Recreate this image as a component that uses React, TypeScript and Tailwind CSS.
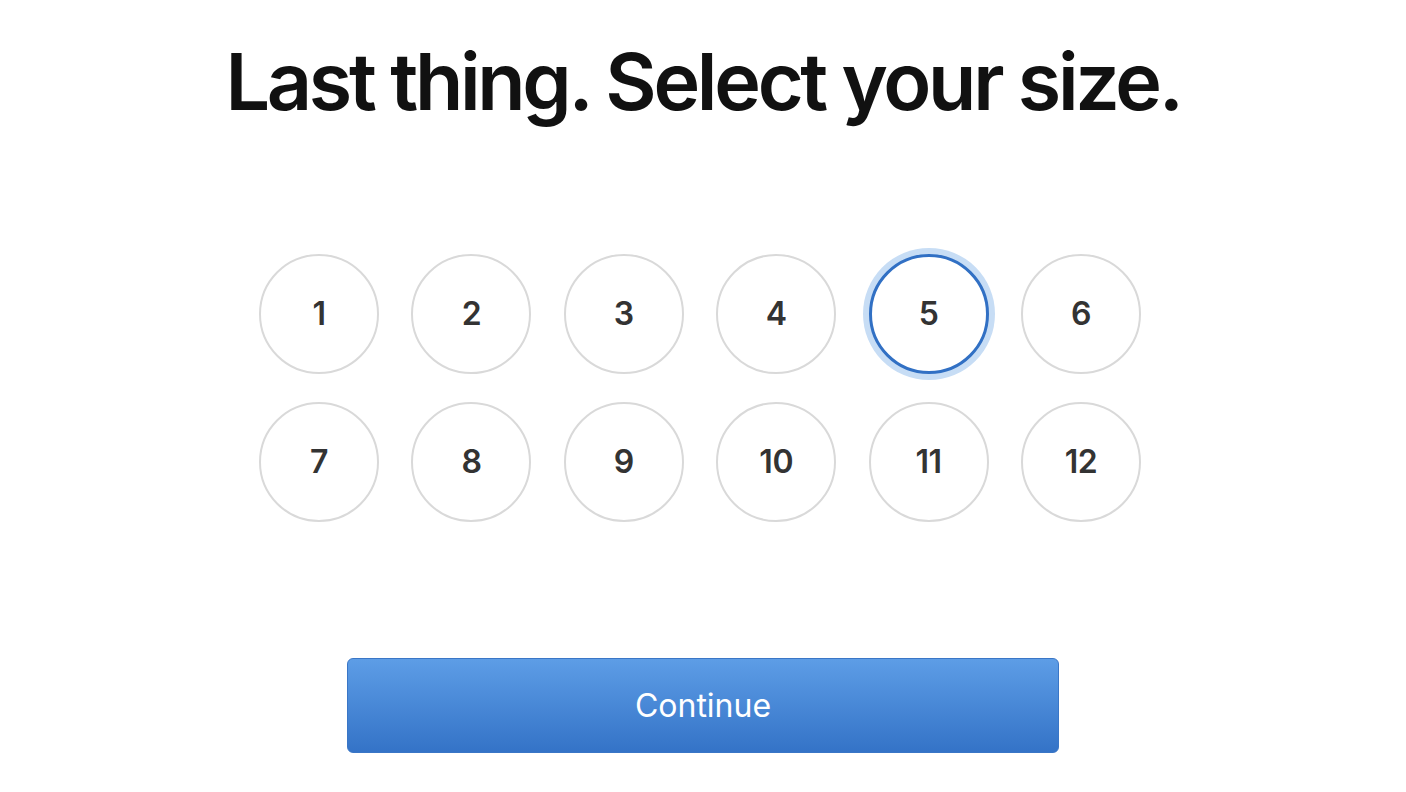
import { useState } from 'react';

const sizes = [1, 2, 3, 4, 5, 6, 7, 8, 9, 10, 11, 12];

export default function App() {
    const [selected, setSelected] = useState(5);

    return (
        <div className="min-h-screen w-full bg-white flex flex-col items-center" style={{ fontFamily: 'Inter, "Noto Sans", "Liberation Sans", sans-serif' }}>
            {/* Heading */}
            <h1 className="mt-[36px] text-[79px] leading-[90px] font-semibold tracking-[-3.3px] text-[#111111]">
                Last thing. Select your size.
            </h1>

            {/* Size grid */}
            <div className="mt-[128px] mr-[6px] grid grid-cols-6 gap-x-[32.4px] gap-y-[28px]">
                {sizes.map((size) => {
                    const active = size === selected;
                    return (
                        <button
                            key={size}
                            onClick={() => setSelected(size)}
                            className={`w-[120px] h-[120px] rounded-full bg-white flex items-center justify-center text-[32px] font-semibold tracking-[-0.5px] text-[#333333] ${
                                active
                                    ? 'border-[3px] border-[#3170c4] ring-[6px] ring-[#c7ddf5]'
                                    : 'border-2 border-[#d9d9d9]'
                            }`}
                        >
                            {size}
                        </button>
                    );
                })}
            </div>

            {/* Continue */}
            <button className="mt-[136px] w-[712px] h-[95px] rounded-[6px] border border-[#3a76c6] bg-gradient-to-b from-[#5d9de6] to-[#3473c7] text-white text-[32px] font-normal">
                Continue
            </button>
        </div>
    );
}
